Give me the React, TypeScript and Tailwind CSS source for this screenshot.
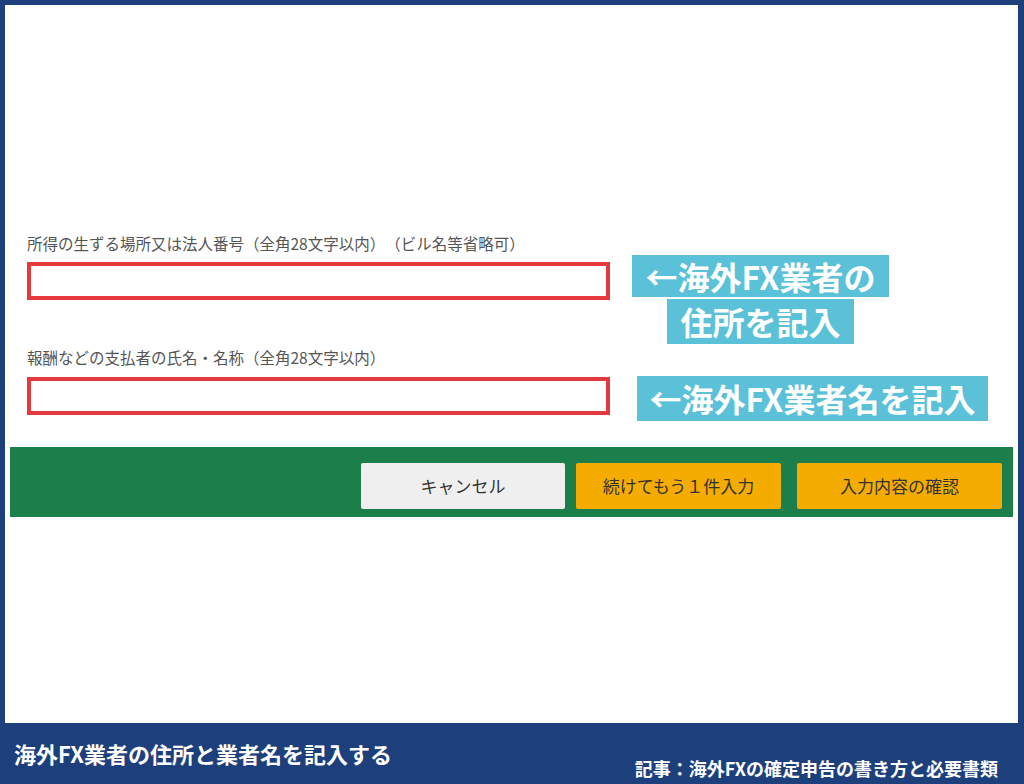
import React from "react";

const font = { fontFamily: '"Noto Sans CJK JP", "Noto Sans", sans-serif' };

export default function App() {
  return (
    <div
      className="w-[1024px] h-[784px] bg-[#1d3f7c] flex flex-col overflow-hidden [text-spacing-trim:space-all]"
      style={font}
    >
      <div className="mt-[5px] ml-[5px] mr-[6px] h-[718px] bg-white flex flex-col">
        <div className="mt-[228px] flex flex-col">
          {/* Row 1 */}
          <div className="flex h-[111px]">
            <div className="ml-[22px] w-[583px] flex flex-col">
              <div className="h-[20px] text-[15.5px] leading-[20px] text-[#555] whitespace-nowrap">
                所得の生ずる場所又は法人番号（全角28文字以内）（ビル名等省略可）
              </div>
              <div className="mt-[9px] h-[38px] border-[4px] border-[#e5393e] bg-white" />
            </div>
            <div className="ml-[22px] mt-[22px] w-[257px] flex flex-col items-center gap-[2px]">
              <div className="h-[42px] w-[257px] bg-[#5bc1d8] text-white font-bold text-[32px] leading-[42px] text-center whitespace-nowrap">
                ←海外FX業者の
              </div>
              <div className="h-[45px] w-[187px] bg-[#5bc1d8] text-white font-bold text-[32px] leading-[45px] text-center whitespace-nowrap">
                住所を記入
              </div>
            </div>
          </div>
          {/* Row 2 */}
          <div className="mt-[3px] flex h-[74px]">
            <div className="ml-[22px] w-[583px] flex flex-col">
              <div className="h-[20px] text-[15.5px] leading-[20px] text-[#555] whitespace-nowrap">
                報酬などの支払者の氏名・名称（全角28文字以内）
              </div>
              <div className="mt-[10px] h-[38px] border-[4px] border-[#e5393e] bg-white" />
            </div>
            <div className="ml-[27px] mt-[29px] h-[45px] w-[351px] bg-[#5bc1d8] text-white font-bold text-[32px] leading-[45px] text-center whitespace-nowrap">
              ←海外FX業者名を記入
            </div>
          </div>
          {/* Green bar */}
          <div className="mt-[26px] mx-[5px] h-[70px] bg-[#1b7e4b] flex justify-end items-start pt-[16px] pr-[11px]">
            <div className="w-[204px] h-[46px] bg-[#efefef] rounded-[2px] flex items-center justify-center text-[17px] text-[#333]">
              キャンセル
            </div>
            <div className="ml-[11px] w-[205px] h-[46px] bg-[#f5ac00] rounded-[2px] flex items-center justify-center text-[17px] text-[#333]">
              続けてもう１件入力
            </div>
            <div className="ml-[16px] w-[205px] h-[46px] bg-[#f5ac00] rounded-[2px] flex items-center justify-center text-[17px] text-[#333]">
              入力内容の確認
            </div>
          </div>
        </div>
      </div>
      <div className="flex-1 flex justify-between items-start text-white font-bold">
        <div className="ml-[14px] mt-[16px] text-[22px] leading-[28px] whitespace-nowrap">
          海外FX業者の住所と業者名を記入する
        </div>
        <div className="mr-[26px] mt-[33px] text-[18px] leading-[24px] whitespace-nowrap">
          記事：海外FXの確定申告の書き方と必要書類
        </div>
      </div>
    </div>
  );
}
